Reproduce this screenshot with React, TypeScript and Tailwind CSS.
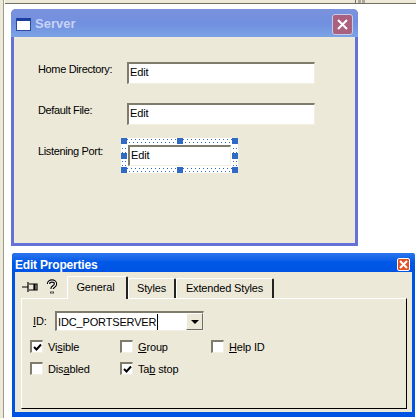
import React from 'react';

const FONT = "font-['Liberation_Sans',Arial,sans-serif]";
const SUNKEN = 'bg-white border-t-2 border-l-2 border-t-[#7f7c6e] border-l-[#7f7c6e] border-b border-r border-b-[#f1efe2] border-r-[#f1efe2]';
const LABEL = 'text-[11px] tracking-[-0.15px] leading-[14px] text-black';
const FORM_LABEL = 'text-[11px] tracking-[-0.35px] leading-[14px] text-black';

function EditBox() {
  return (
    <div className={`w-[188px] h-[22px] ${SUNKEN} pl-[1px] ${LABEL} leading-[17px]`}>
      Edit
    </div>
  );
}

function Handle() {
  return <div className="w-[6px] h-[6px] shrink-0 bg-[#316ac5]" />;
}

function DotsH() {
  return (
    <div className="flex-1 h-[6px] flex flex-col justify-center gap-[2px]">
      <div className="h-[1px] bg-[repeating-linear-gradient(90deg,#316ac5_0_1px,#fff_1px_4px)]" />
      <div className="h-[1px] ml-[2px] bg-[repeating-linear-gradient(90deg,#316ac5_0_1px,#fff_1px_4px)]" />
    </div>
  );
}

function DotsV() {
  return (
    <div className="flex-1 w-[6px] flex justify-center gap-[2px]">
      <div className="w-[1px] bg-[repeating-linear-gradient(0deg,#316ac5_0_1px,#fff_1px_4px)]" />
      <div className="w-[1px] bg-[repeating-linear-gradient(0deg,#316ac5_0_1px,#fff_1px_4px)]" />
    </div>
  );
}

function HandleRow() {
  return (
    <div className="flex items-center h-[6px]">
      <Handle />
      <DotsH />
      <Handle />
      <DotsH />
      <Handle />
    </div>
  );
}

function HandleColumn() {
  return (
    <div className="w-[6px] h-[21px] flex flex-col items-center">
      <DotsV />
      <Handle />
      <DotsV />
    </div>
  );
}

function CheckBox({ label, checked }: { label: [string, string, string]; checked?: boolean }) {
  return (
    <div className="flex items-center gap-[5px] h-[13px]">
      <div className={`w-[13px] h-[13px] ${SUNKEN} flex items-center justify-center`}>
        {checked && (
          <svg width="9" height="9" viewBox="0 0 9 9">
            <path d="M1 4 L3.5 6.5 L8 1.5" fill="none" stroke="#000" strokeWidth="2" />
          </svg>
        )}
      </div>
      <span className={`${LABEL} whitespace-pre`}>
        {label[0]}
        <span className="underline">{label[1]}</span>
        {label[2]}
      </span>
    </div>
  );
}

export default function App() {
  return (
    <div className={`w-[416px] h-[418px] overflow-hidden bg-white flex flex-col ${FONT}`}>
      {/* desktop strip on top */}
      <div className="h-[4px] shrink-0 ml-[5px] bg-[#ece9d8] border-b border-b-[#716f64] flex justify-end">
        <div className="w-[12px] h-[3px] mr-[49px] border-l border-l-[#716f64] pl-[2px] flex gap-[1px]">
          <div className="w-[3px] h-[3px] bg-[#aca899]" />
          <div className="w-[3px] h-[3px] bg-[#aca899]" />
        </div>
      </div>
      <div className="flex flex-1">
        <div className="w-[4px] shrink-0 bg-[#ece9d8] border-r border-r-[#9d9a8a] -mt-[4px]" />
        <div className="flex-1 pt-[5px] pl-[7px]">
          {/* Server dialog (inactive) */}
          <div className="w-[347px] h-[237px] rounded-t-[5px] bg-[#6471d6] px-[3px] pb-[3px] flex flex-col">
            <div className="h-[28px] -mx-[3px] pt-[2px] shrink-0 rounded-t-[5px] bg-gradient-to-b from-[#7b93dd] via-[#718fdf] to-[#7ba3e6] flex items-center pl-[5px] pr-[5px]">
              <div className="w-[15px] h-[13px] bg-white border border-[#2c4a9e] border-t-[3px] border-t-[#1d3f9e]" />
              <span className="ml-[4px] text-[13px] font-bold text-[#c6d3f5]">Server</span>
              <div className="ml-auto w-[21px] h-[21px] rounded-[3px] border border-[#c7cbe8] bg-[#a9617f] flex items-center justify-center">
                <svg width="11" height="11" viewBox="0 0 11 11">
                  <path d="M1 1 L10 10 M10 1 L1 10" stroke="#fff" strokeWidth="2" />
                </svg>
              </div>
            </div>
            <div className="flex-1 bg-[#ece9d8] pl-[24px] pt-[25px] flex flex-col">
              <div className="flex items-start">
                <span className={`w-[89px] ${FORM_LABEL}`}>Home Directory:</span>
                <EditBox />
              </div>
              <div className="flex items-start mt-[19px]">
                <span className={`w-[89px] ${FORM_LABEL}`}>Default File:</span>
                <EditBox />
              </div>
              <div className="flex items-start mt-[13px]">
                <span className={`w-[83px] mt-[6px] ${FORM_LABEL}`}>Listening Port:</span>
                {/* selected control with handles */}
                <div className="w-[117px] h-[35px] flex flex-col justify-between bg-white">
                  <HandleRow />
                  <div className="flex justify-between items-center h-[21px]">
                    <HandleColumn />
                    <div className={`w-[103px] h-[21px] ${SUNKEN} pl-[1px] ${LABEL} leading-[17px]`}>
                      Edit
                    </div>
                    <HandleColumn />
                  </div>
                  <HandleRow />
                </div>
              </div>
            </div>
          </div>

          {/* Edit Properties tool window */}
          <div className="mt-[7px] ml-[1px] w-[403px] h-[164px] rounded-t-[3px] bg-[#0054e3] pl-[3px] pr-[3px] pb-[5px] flex flex-col">
            <div className="h-[19px] pt-[4px] -mx-[3px] shrink-0 rounded-t-[3px] bg-gradient-to-b from-[#2a76ee] via-[#0058e6] to-[#0054e3] flex items-center pl-[3px] pr-[5px]">
              <span className="text-[12px] font-bold tracking-[-0.2px] text-white">Edit Properties</span>
              <div className="ml-auto w-[13px] h-[13px] rounded-[2px] border border-white bg-[#e0532a] flex items-center justify-center">
                <svg width="9" height="9" viewBox="0 0 9 9">
                  <path d="M1 1 L8 8 M8 1 L1 8" stroke="#fff" strokeWidth="2" />
                </svg>
              </div>
            </div>
            <div className="flex-1 bg-[#ece9d8] flex flex-col pl-[6px] pr-[5px] pb-[3px]">
              <div className="h-[26px] flex items-end shrink-0">
                <div className="w-[46px] h-[22px] flex items-center pl-[1px] gap-[8px]">
                  <svg width="16" height="12" viewBox="0 0 16 12">
                    <path d="M0 6 H6 M6 1 V11 M7 3 H15 V9 H7 M12 3 V9 M13 3 V9" fill="none" stroke="#000" strokeWidth="1.2" />
                  </svg>
                  <svg width="12" height="16" viewBox="0 0 12 16">
                    <path d="M2.5 5 C2.5 1 9.5 1 9.5 5 C9.5 7.5 6 7.5 6 10 M6 12.5 V14.5" fill="none" stroke="#000" strokeWidth="3.4" />
                    <path d="M2.5 5 C2.5 1 9.5 1 9.5 5 C9.5 7.5 6 7.5 6 10 M6 12.5 V14.5" fill="none" stroke="#fff" strokeWidth="1.2" />
                  </svg>
                </div>
                <div className={`w-[61px] h-[23px] pr-[3px] bg-[#ece9d8] border-t border-l border-t-white border-l-white border-r-2 border-r-[#222] rounded-t-[2px] ${LABEL} leading-[21px] text-center relative z-10 -mb-[1px]`}>
                  General
                </div>
                <div className={`w-[48px] h-[20px] border-t border-l border-t-white border-l-white border-r-2 border-r-[#222] rounded-t-[2px] ${LABEL} leading-[18px] text-center`}>
                  Styles
                </div>
                <div className={`w-[98px] h-[20px] border-t border-l border-t-white border-l-white border-r-2 border-r-[#222] rounded-t-[2px] ${LABEL} leading-[18px] text-center`}>
                  Extended Styles
                </div>
              </div>
              <div className="flex-1 border-t border-l border-t-white border-l-white border-r border-b border-r-black border-b-black pl-[11px] pt-[12px] flex flex-col">
                <div className="flex items-center h-[20px]">
                  <span className={`w-[22px] ${LABEL}`}><span className="underline">I</span>D:</span>
                  <div className={`w-[149px] h-[20px] ${SUNKEN} flex items-center justify-between`}>
                    <span className={`pl-[1px] ${LABEL} leading-[16px] border-r border-r-black pr-[1px]`}>IDC_PORTSERVER</span>
                    <div className="w-[17px] h-[17px] bg-[#ece9d8] border border-t-white border-l-white border-r-[#716f64] border-b-[#716f64] flex items-center justify-center">
                      <div className="w-0 h-0 border-l-[4px] border-r-[4px] border-t-[4px] border-l-transparent border-r-transparent border-t-black" />
                    </div>
                  </div>
                </div>
                <div className="grid grid-cols-[90px_91px_1fr] gap-y-[9px] mt-[9px] -ml-[3px]">
                  <CheckBox label={['Vi', 's', 'ible']} checked />
                  <CheckBox label={['', 'G', 'roup']} />
                  <CheckBox label={['', 'H', 'elp ID']} />
                  <CheckBox label={['Dis', 'a', 'bled']} />
                  <CheckBox label={['Ta', 'b', ' stop']} checked />
                </div>
              </div>
            </div>
          </div>
        </div>
      </div>
    </div>
  );
}
